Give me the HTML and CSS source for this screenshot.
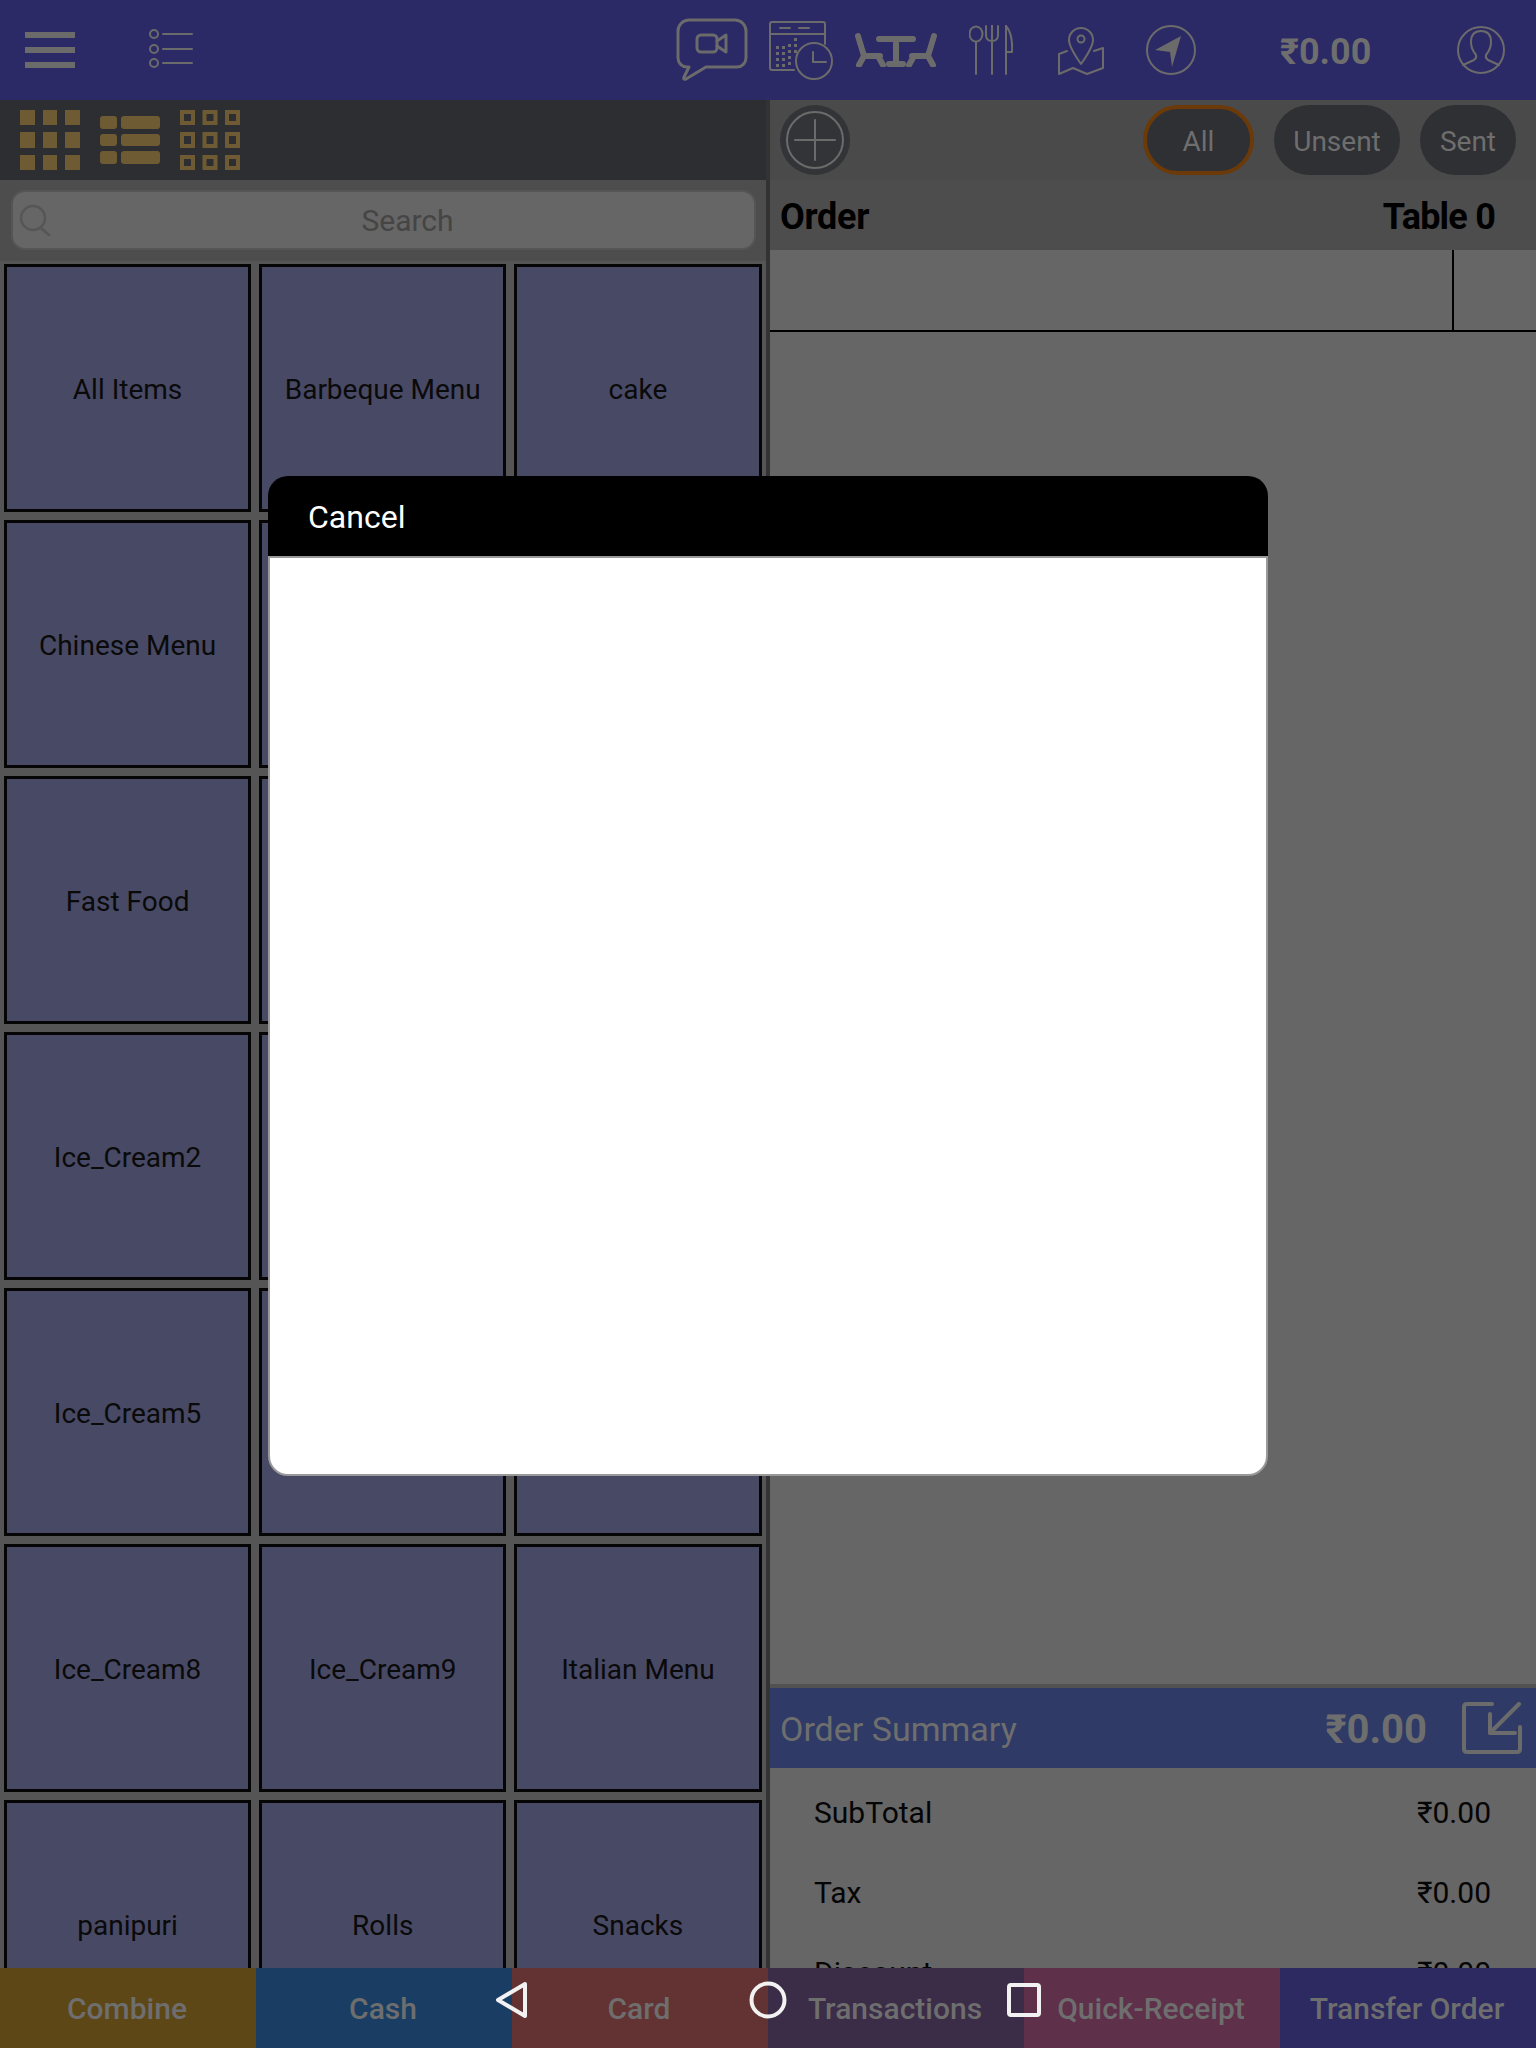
FILE: index.html
```html
<!DOCTYPE html>
<html lang="en">
<head>
<meta charset="utf-8">
<title>Order</title>
<link rel="stylesheet" href="styles.css">
</head>
<body>
<div class="app">
  <header class="topbar">
    <svg class="ico" width="50" height="36" viewBox="0 0 50 36"><path class="fill" d="M0 0h50v6H0zM0 15h50v6H0zM0 30h50v6H0z"/></svg>
    <svg class="ico list-ico" width="44" height="40" viewBox="0 0 44 40"><g class="line"><ellipse cx="5" cy="5" rx="4" ry="4"/><ellipse cx="5" cy="20" rx="4" ry="4"/><ellipse cx="5" cy="34" rx="4" ry="4"/><path d="M14 5h29M14 20h29M14 34h29"/></g></svg>
    <div class="top-icons">
      <svg class="ico chat" width="72" height="64" viewBox="0 0 72 64"><g class="line thick"><path d="M13 2h46a11 11 0 0 1 11 11v27a9 9 0 0 1-9 9H30L10 61q-3 1-2-2l5-10h-2a9 9 0 0 1-9-9V13A11 11 0 0 1 13 2z"/><rect x="21" y="17" width="20" height="17" rx="4"/><path d="M41 23l9-6v17l-9-6"/></g></svg>
      <svg class="ico cal" width="66" height="62" viewBox="0 0 66 62"><g class="line"><path d="M26 50H4q-2 0-2-2V4q0-2 2-2h51q2 0 2 2v20"/><path d="M2 14h55M12 8h10M31 8h10"/><circle cx="46" cy="41" r="18"/><path d="M45 32v10h13"/></g><path class="fill" d="M8 26h3v3H8zM14 26h3v3h-3zM20 24h3v3h-3zM8 32h3v3H8zM14 32h3v3h-3zM20 30h3v3h-3zM8 38h3v3H8zM14 38h3v3h-3zM20 36h3v3h-3zM8 44h3v3H8zM14 44h3v3h-3zM20 42h3v3h-3zM26 24h3v3h-3zM26 18h3v3h-3zM26 30h3v3h-3z"/></svg>
      <svg class="ico tables" width="82" height="34" viewBox="0 0 82 34"><g class="line wide"><path d="M3 3l6 20h16M9 23L4 32M23 23l5 9"/><path d="M79 3l-6 20H57M73 23l5 9M59 23l-5 9"/><path d="M24 6h34M41 6v25M34 31h14"/></g></svg>
      <svg class="ico utensils" width="44" height="50" viewBox="0 0 44 50"><g class="line"><ellipse cx="7" cy="9" rx="6.500" ry="7.500"/><path d="M7 17v32M23 0v49M17 1v9q0 6 6 6t6-6V1M37 0v49M37 1q7 8 6 26h-6"/></g></svg>
      <svg class="ico map" width="46" height="48" viewBox="0 0 46 48"><g class="line"><path d="M23 37Q11 20 11 13a12 12 0 0 1 24 0q0 7-12 24z"/><circle cx="23" cy="12" r="3.500"/><path d="M9 24L1 27v20l14-6 14 6 16-6V21l-9 3"/></g></svg>
      <svg class="ico nav" width="50" height="50" viewBox="0 0 50 50"><circle class="line" cx="25" cy="25" r="24"/><path class="fill" d="M35 11L9 25l15 2 2 15z"/></svg>
      <span class="top-total">₹0.00</span>
      <svg class="ico user" width="48" height="48" viewBox="0 0 48 48"><g class="line"><ellipse cx="24" cy="24" rx="23" ry="23"/><path d="M6 39l11-5q3-2 2-5-5-6-5-13 0-11 10-11t10 11q0 7-5 13-1 3 2 5l11 5"/></g></svg>
    </div>
  </header>

  <main class="main">
    <section class="left">
      <div class="view-bar">
        <svg width="60" height="60" viewBox="0 0 60 60"><path class="gold" d="M0 0h15v15H0zM23 0h14v15H23zM45 0h15v15H45zM0 22h15v16H0zM23 22h14v16H23zM45 22h15v16H45zM0 45h15v15H0zM23 45h14v15H23zM45 45h15v15H45z"/></svg>
        <svg width="60" height="48" viewBox="0 0 60 48"><g class="gold"><rect width="17" height="13" rx="3"/><rect x="21" width="39" height="13" rx="3"/><rect y="18" width="17" height="12" rx="3"/><rect x="21" y="18" width="39" height="12" rx="3"/><rect y="35" width="17" height="13" rx="3"/><rect x="21" y="35" width="39" height="13" rx="3"/></g></svg>
        <svg width="60" height="60" viewBox="0 0 60 60"><path class="gold-line" d="M2 2h11v11H2zM24.500 2h11v11h-11zM47 2h11v11H47zM2 24h11v12H2zM24.500 24h11v12h-11zM47 24h11v12H47zM2 47h11v11H2zM24.500 47h11v11h-11zM47 47h11v11H47z"/></svg>
      </div>
      <div class="search-wrap">
        <div class="search">
          <svg class="search-ico" width="32" height="32" viewBox="0 0 32 32"><g class="search-line"><circle cx="14" cy="14" r="12"/><path d="M22 24l9 8"/></g></svg>
          <span>Search</span>
        </div>
      </div>
      <div class="grid">
        <div class="cell">All Items</div><div class="cell">Barbeque Menu</div><div class="cell">cake</div>
        <div class="cell">Chinese Menu</div><div class="cell"></div><div class="cell"></div>
        <div class="cell">Fast Food</div><div class="cell"></div><div class="cell"></div>
        <div class="cell">Ice_Cream2</div><div class="cell"></div><div class="cell"></div>
        <div class="cell">Ice_Cream5</div><div class="cell"></div><div class="cell"></div>
        <div class="cell">Ice_Cream8</div><div class="cell">Ice_Cream9</div><div class="cell">Italian Menu</div>
        <div class="cell">panipuri</div><div class="cell">Rolls</div><div class="cell">Snacks</div>
      </div>
    </section>

    <section class="right">
      <div class="filter-bar">
        <svg class="plus" width="70" height="70" viewBox="0 0 70 70"><circle class="plus-bg" cx="35" cy="35" r="35"/><g class="line"><circle cx="35" cy="35" r="28"/><path d="M35 15v40M15 35h40"/></g></svg>
        <div class="pills">
          <span class="pill active">All</span>
          <span class="pill unsent">Unsent</span>
          <span class="pill sent">Sent</span>
        </div>
      </div>
      <div class="order-head"><span>Order</span><span class="table-no">Table 0</span></div>
      <div class="order-cols"><div class="col-main"></div><div class="col-side"></div></div>
      <div class="order-body"></div>
      <div class="summary">
        <div class="summary-head">
          <span class="summary-title">Order Summary</span>
          <span class="summary-total">₹0.00</span>
          <svg class="ico" width="60" height="52" viewBox="0 0 60 52"><g class="line thick3"><path d="M30 2H5Q2 2 2 5v42q0 3 3 3h50q3 0 3-3V25"/><path d="M57 2L28 31M28 12v19h25"/></g></svg>
        </div>
        <div class="sum-rows">
          <div class="sum-row"><span>SubTotal</span><span>₹0.00</span></div>
          <div class="sum-row"><span>Tax</span><span>₹0.00</span></div>
          <div class="sum-row"><span>Discount</span><span>₹0.00</span></div>
        </div>
      </div>
    </section>
  </main>

  <footer class="actions">
    <div class="act combine">Combine</div>
    <div class="act cash">Cash</div>
    <div class="act card">Card</div>
    <div class="act trans">Transactions</div>
    <div class="act quick">Quick-Receipt</div>
    <div class="act transfer">Transfer Order</div>
  </footer>

  <svg class="nav-back" width="34" height="38" viewBox="0 0 34 38"><path d="M30 3L3 19l27 16z"/></svg>
  <svg class="nav-home" width="38" height="38" viewBox="0 0 38 38"><circle cx="19" cy="19" r="16.500"/></svg>
  <svg class="nav-recent" width="34" height="34" viewBox="0 0 34 34"><rect x="2" y="2" width="30" height="30" rx="2"/></svg>

  <div class="modal">
    <div class="modal-head">Cancel</div>
    <div class="modal-body"></div>
  </div>
</div>
</body>
</html>
```

FILE: styles.css
```css
* { box-sizing: border-box; }
html, body { margin: 0; padding: 0; }
body { font-family: Roboto, "Noto Sans", "Liberation Sans", sans-serif; color: #000; }

.app {
  position: relative;
  width: 1536px;
  height: 2048px;
  overflow: hidden;
  display: flex;
  flex-direction: column;
  background: #666;
}

.ico { display: block; flex: none; }
.line { fill: none; stroke: #6b6b6b; stroke-width: 2; stroke-linejoin: round; stroke-linecap: round; }
.line.thick { stroke-width: 3; }
.line.thick3 { stroke-width: 4; }
.line.wide { stroke-width: 6; }
.fill { fill: #6b6b6b; }
.gold { fill: #6f5b33; }
.gold-line { fill: none; stroke: #6f5b33; stroke-width: 4; }

.topbar {
  flex: none;
  height: 100px;
  background: #2b2966;
  display: flex;
  align-items: center;
  padding-left: 25px;
}
.list-ico { margin-left: 74px; margin-top: -2px; }
.top-icons {
  margin-left: auto;
  display: flex;
  align-items: center;
  height: 100%;
  padding-right: 31px;
}
.chat { margin-right: 20px; }
.cal { margin-right: 21px; margin-top: 2px; }
.tables { margin-right: 32px; }
.utensils { margin-right: 45px; }
.map { margin-right: 42px; margin-top: 2px; }
.nav { margin-right: 84px; }
.top-total { width: 177px; padding-top: 4px; font-size: 36px; font-weight: 700; color: #6e6e6e; white-space: nowrap; }

.main {
  flex: 1;
  min-height: 0;
  display: grid;
  grid-template-columns: 770px 766px;
}

.left {
  min-height: 0;
  overflow: hidden;
  background: #555;
  border-right: 4px solid #333;
  display: flex;
  flex-direction: column;
}
.view-bar {
  flex: none;
  height: 80px;
  margin-right: -4px;
  background: #2d2e32;
  display: flex;
  align-items: center;
  gap: 20px;
  padding-left: 20px;
}
.search-wrap {
  flex: none;
  height: 81px;
  padding: 10px 10px 11px 11px;
  background: #4d4d4d;
}
.search {
  position: relative;
  height: 60px;
  background: #666;
  border: 2px solid #555;
  border-radius: 14px;
  display: flex;
  align-items: center;
  justify-content: center;
  padding-left: 48px;
  font-size: 30px;
  color: #454545;
}
.search-ico { position: absolute; left: 6px; top: 12px; }
.search-line { fill: none; stroke: #565656; stroke-width: 2.500; }

.grid {
  flex: none;
  padding: 3px 4.500px 0 4px;
  display: grid;
  grid-template-columns: repeat(3, 1fr);
  grid-auto-rows: 248px;
  gap: 8px;
}
.cell {
  background: #484965;
  border: 3px solid #050505;
  display: flex;
  align-items: center;
  justify-content: center;
  padding-top: 3px;
  font-size: 28px;
  color: #0a0a0a;
}

.right {
  min-height: 0;
  overflow: hidden;
  display: flex;
  flex-direction: column;
}
.filter-bar {
  flex: none;
  height: 80px;
  background: #4a4a4a;
  display: flex;
  align-items: center;
  padding: 0 20px 0 10px;
}
.plus { display: block; }
.plus-bg { fill: #333438; }
.pills { margin-left: auto; display: flex; gap: 20px; }
.pill {
  height: 70px;
  border-radius: 35px;
  background: #2f3034;
  display: flex;
  align-items: center;
  justify-content: center;
  padding-top: 2px;
  font-size: 28px;
  color: #6e6e6e;
}
.pill.active { width: 111px; border: 4px solid #6b3a08; }
.pill.unsent { width: 126px; }
.pill.sent { width: 96px; }

.order-head {
  flex: none;
  height: 70px;
  background: #4d4d4e;
  display: flex;
  align-items: center;
  justify-content: space-between;
  padding: 3px 41px 0 10px;
  font-size: 36px;
  font-weight: 700;
  color: #000;
  letter-spacing: -0.3px;
}
.table-no { letter-spacing: -0.8px; }
.order-cols {
  flex: none;
  height: 82px;
  display: flex;
  border-bottom: 2px solid #000;
}
.col-main { width: 684px; border-right: 2px solid #000; }
.col-side { flex: 1; }
.order-body { flex: 1; min-height: 0; }

.summary {
  flex: none;
  height: 284px;
  overflow: hidden;
  border-top: 4px solid #525252;
}
.summary-head {
  height: 80px;
  background: #2f3b66;
  display: flex;
  align-items: center;
  padding: 0 14px 0 10px;
  color: #6e6e6e;
}
.summary-title { font-size: 34px; padding-top: 1px; }
.summary-total { margin-left: auto; margin-right: 35px; padding-top: 3px; font-size: 40px; font-weight: 700; }
.sum-rows { padding-top: 4px; }
.sum-row {
  height: 80px;
  display: flex;
  align-items: center;
  justify-content: space-between;
  padding: 0 45px 0 44px;
  font-size: 30px;
  color: #050505;
}

.actions {
  flex: none;
  height: 80px;
  display: grid;
  grid-template-columns: repeat(6, 1fr);
}
.act {
  display: flex;
  align-items: center;
  justify-content: center;
  padding-right: 2px;
  font-size: 30px;
  font-weight: 500;
  color: #6e6e6e;
}
.combine { background: #5e4716; }
.cash { background: #1a3e63; }
.card { background: #633333; }
.trans { background: #3b2c47; }
.quick { background: #5f304a; }
.transfer { background: #2c2a60; }

.nav-back, .nav-home, .nav-recent { position: absolute; fill: none; stroke: #f2f2f2; stroke-width: 4; stroke-linejoin: round; }
.nav-back { left: 495px; top: 1981px; }
.nav-home { left: 749px; top: 1981px; }
.nav-recent { left: 1007px; top: 1983px; }

.modal {
  position: absolute;
  left: 268px;
  top: 476px;
  width: 1000px;
  height: 1000px;
  display: flex;
  flex-direction: column;
}
.modal-head {
  flex: none;
  height: 80px;
  background: #000;
  border-radius: 20px 20px 0 0;
  display: flex;
  align-items: center;
  padding-left: 40px;
  padding-top: 1px;
  font-size: 32px;
  color: #fff;
}
.modal-body {
  flex: 1;
  background: #fff;
  border: 2px solid #999;
  border-radius: 0 0 20px 20px;
}
```
